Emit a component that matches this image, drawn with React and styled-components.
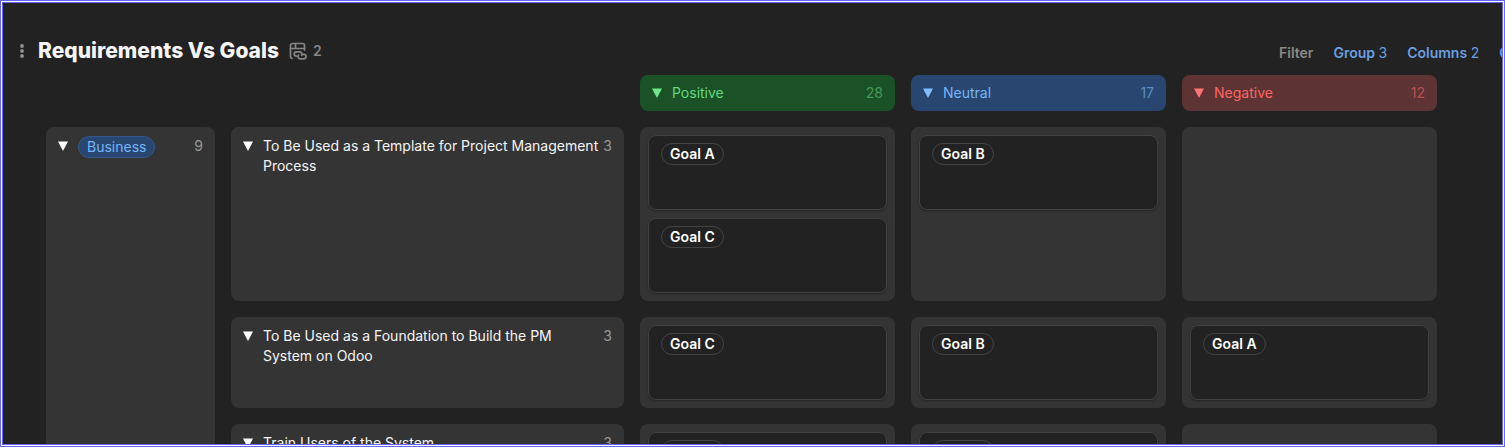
import React, { useState } from "react";
import styled, { createGlobalStyle } from "styled-components";

const columns = [
    { name: "Positive", count: 28, bg: "#1b5127", fg: "#62d97a", dim: "#459a57", arrow: "#71e58a" },
    { name: "Neutral", count: 17, bg: "#28466f", fg: "#75b5fb", dim: "#5b8dc6", arrow: "#82bdff" },
    { name: "Negative", count: 12, bg: "#5d3433", fg: "#ff6565", dim: "#b55252", arrow: "#ff7474" },
];

const requirements = [
    {
        title: "To Be Used as a Template for Project Management Process",
        count: 3,
        goals: [["Goal A", "Goal C"], ["Goal B"], []],
    },
    {
        title: "To Be Used as a Foundation to Build the PM System on Odoo",
        count: 3,
        goals: [["Goal C"], ["Goal B"], ["Goal A"]],
    },
    {
        title: "Train Users of the System",
        count: 3,
        goals: [["Goal A"], ["Goal B"], []],
    },
];

function LinkedTableIcon() {
    return (
        <svg width="18" height="18" viewBox="0 0 18 18" fill="none" stroke="currentColor" strokeWidth="1.7" strokeLinecap="round" aria-hidden="true">
            <path d="M15.500 8V3.500a2 2 0 0 0-2-2H3.500a2 2 0 0 0-2 2v11a2 2 0 0 0 1.500 2" />
            <path d="M1.500 6.500h14M6.500 1.500v5" />
            <path d="M8 14.200H7.400a2.200 2.200 0 0 1 0-4.400h3.400a2.200 2.200 0 0 1 1.700 3.600" />
            <path d="M13 12.300h1.800a2.200 2.200 0 0 1 0 4.500h-3.600a2.200 2.200 0 0 1-1.700-3.600" />
        </svg>
    );
}

function GripIcon() {
    return (
        <svg width="4" height="14" viewBox="0 0 4 14" fill="currentColor" aria-hidden="true">
            <circle cx="2" cy="2" r="1.9" />
            <circle cx="2" cy="7" r="1.9" />
            <circle cx="2" cy="12" r="1.9" />
        </svg>
    );
}

function Toggle(props) {
    return (
        <ToggleButton
            type="button"
            color={props.color}
            aria-label={"Toggle " + props.label}
            aria-expanded={props.open}
            onClick={props.onClick}
        >
            <svg width="10" height="10" viewBox="0 0 10 10" fill="currentColor" aria-hidden="true">
                <path d="M0 0.500h10L5 10z" />
            </svg>
        </ToggleButton>
    );
}

function GoalCell(props) {
    return (
        <Cell>
            {props.goals.map((goal) => (
                <Card key={goal}>
                    <GoalTag>{goal}</GoalTag>
                </Card>
            ))}
        </Cell>
    );
}

function App() {
    const [closed, setClosed] = useState({});
    const flip = (key) => setClosed({ ...closed, [key]: !closed[key] });

    return (
        <Frame>
            <GlobalStyle />
            <Page>
                <Header>
                    <GripButton type="button" aria-label="Table menu">
                        <GripIcon />
                    </GripButton>
                    <Title>Requirements Vs Goals</Title>
                    <Source>
                        <LinkedTableIcon />
                        2
                    </Source>
                    <Toolbar>
                        <ToolButton type="button" muted>Filter</ToolButton>
                        <ToolButton type="button">Group <span>3</span></ToolButton>
                        <ToolButton type="button">Columns <span>2</span></ToolButton>
                        <ToolButton type="button">Options</ToolButton>
                    </Toolbar>
                </Header>
                <Board>
                    <Corner />
                    {columns.map((col) => (
                        <ColumnHead key={col.name} bg={col.bg} fg={col.fg}>
                            <Toggle label={col.name} color={col.arrow} open={!closed[col.name]} onClick={() => flip(col.name)} />
                            <Label>{col.name}</Label>
                            <Count color={col.dim}>{col.count}</Count>
                        </ColumnHead>
                    ))}
                    <Group rows={requirements.length}>
                        <Toggle label="Business" open={!closed.business} onClick={() => flip("business")} />
                        <Label>
                            <GroupTag>Business</GroupTag>
                        </Label>
                        <Count>9</Count>
                    </Group>
                    {requirements.map((req) => (
                        <React.Fragment key={req.title}>
                            <Panel>
                                <Toggle label={req.title} open={!closed[req.title]} onClick={() => flip(req.title)} />
                                <Label>{req.title}</Label>
                                <Count>{req.count}</Count>
                            </Panel>
                            {columns.map((col, i) => (
                                <GoalCell key={col.name} goals={closed[req.title] || closed[col.name] ? [] : req.goals[i]} />
                            ))}
                        </React.Fragment>
                    ))}
                </Board>
            </Page>
        </Frame>
    );
}

const GlobalStyle = createGlobalStyle`
    * {
        box-sizing: border-box;
    }
    body {
        margin: 0;
        background: #222222;
        font-family: Inter, "Liberation Sans", sans-serif;
        font-size: 14px;
        line-height: 20px;
        color: #f5f5f5;
    }
    button {
        margin: 0;
        padding: 0;
        border: 0;
        background: none;
        color: inherit;
        font: inherit;
        cursor: pointer;
    }
    svg {
        display: block;
        flex: none;
    }
`;

const Frame = styled.div`
    height: 100vh;
    padding: 1px;
    border: 1px solid #6464f5;
    background: #ffffff;
`;

const Page = styled.main`
    height: 100%;
    padding-top: 32px;
    border: 1px solid #6464f5;
    background: #222222;
    overflow: hidden;
`;

const Header = styled.header`
    display: flex;
    align-items: center;
    height: 32px;
    padding-left: 17px;
    margin-bottom: 8px;
`;

const GripButton = styled.button`
    color: #929292;
    margin-right: 14px;
`;

const Title = styled.h1`
    margin: 0;
    font-size: 21px;
    line-height: 28px;
    font-weight: 800;
    white-space: nowrap;
`;

const Source = styled.div`
    display: flex;
    align-items: center;
    gap: 6px;
    margin-left: 10px;
    color: #858585;
    font-weight: 600;
`;

const Toolbar = styled.nav`
    display: flex;
    gap: 20px;
    width: 223px;
    margin-left: auto;
    padding-top: 3px;
    overflow: hidden;
`;

const ToolButton = styled.button.withConfig({
    shouldForwardProp: (prop) => prop !== "muted",
})`
    flex: none;
    color: ${(props) => (props.muted ? "#8a8984" : "#6a9fe0")};
    font-weight: 600;

    span {
        font-weight: 400;
    }
`;

const Board = styled.section`
    display: grid;
    grid-template-columns: minmax(0, 169fr) minmax(0, 393fr) repeat(3, minmax(0, 255fr));
    gap: 16px;
    padding: 0 65px 16px 43px;
`;

const Corner = styled.div`
    grid-column: span 2;
`;

const Panel = styled.div`
    display: flex;
    align-items: flex-start;
    padding: 9px 12px;
    border-radius: 8px;
    background: #343434;
`;

const ColumnHead = styled(Panel).withConfig({
    shouldForwardProp: (prop) => !["bg", "fg"].includes(prop),
})`
    padding: 8px 12px;
    background: ${(props) => props.bg};
    color: ${(props) => props.fg};
`;

const Group = styled(Panel).withConfig({
    shouldForwardProp: (prop) => prop !== "rows",
})`
    grid-row: span ${(props) => props.rows};
`;

const ToggleButton = styled.button`
    display: flex;
    align-items: center;
    flex: none;
    height: 20px;
    margin-right: 10px;
    color: ${(props) => props.color || "#ffffff"};
`;

const Label = styled.div`
    flex: 1;
    min-width: 0;
`;

const Count = styled.span`
    margin-left: 2px;
    color: ${(props) => props.color || "#999999"};
`;

const Tag = styled.span`
    display: inline-block;
    padding: 0 8px;
    border: 1px solid #444444;
    border-radius: 11px;
    vertical-align: top;
`;

const GroupTag = styled(Tag)`
    border-color: #34588b;
    background: #28466f;
    color: #75b5fb;
`;

const GoalTag = styled(Tag)`
    font-weight: 600;
    color: #ffffff;
`;

const Cell = styled.div`
    display: flex;
    flex-direction: column;
    gap: 8px;
    padding: 8px;
    border-radius: 8px;
    background: #343434;
`;

const Card = styled.article`
    height: 75px;
    padding: 7px 12px;
    border: 1px solid #414141;
    border-radius: 8px;
    background: #222222;
    box-shadow: 0 1px 2px rgba(0, 0, 0, 0.3);
`;

export default App;
